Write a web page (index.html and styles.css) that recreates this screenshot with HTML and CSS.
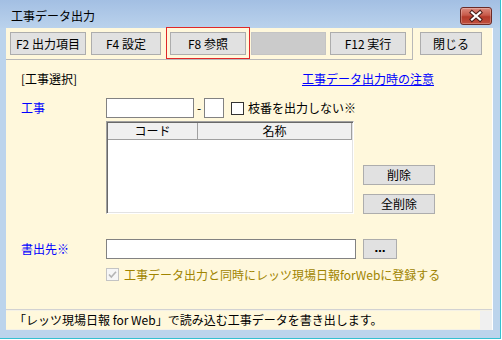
FILE: index.html
```html
<!DOCTYPE html>
<html lang="ja">
<head>
<meta charset="utf-8">
<title>工事データ出力</title>
<link rel="stylesheet" href="styles.css">
</head>
<body>
<div class="window">
  <div class="titlebar">
    <span class="title">工事データ出力</span>
    <div class="close-x">
      <svg width="32" height="18" viewBox="0 0 32 18">
        <path d="M12 5.5 L20 12.5 M20 5.5 L12 12.5" stroke="#4a1d18" stroke-width="4.2" stroke-linecap="square" fill="none"/>
        <path d="M12 5.5 L20 12.5 M20 5.5 L12 12.5" stroke="#ffffff" stroke-width="2.2" stroke-linecap="square" fill="none"/>
      </svg>
    </div>
  </div>
  <div class="client">
    <div class="toolbar-row">
      <div class="toolbar">
        <div class="btn tb w76 first">F2 出力項目</div>
        <div class="btn tb w70 gap5">F4 設定</div>
        <div class="focus-ring"><div class="btn tb w76">F8 参照</div></div>
        <div class="tb-blank"></div>
        <div class="btn tb w76 gap4">F12 実行</div>
      </div>
      <div class="btn tb close-btn">閉じる</div>
    </div>
    <div class="main">
      <div class="head-row">
        <span>[工事選択]</span>
        <a class="link" href="#">工事データ出力時の注意</a>
      </div>
      <div class="form-row">
        <span class="label">工事</span>
        <div class="textbox w88"></div>
        <span class="dash">-</span>
        <div class="textbox w20"></div>
        <span class="checkbox"></span>
        <span class="check-text">枝番を出力しない※</span>
      </div>
      <div class="list-row">
        <div class="listview">
          <div class="lv-head">
            <div class="lv-col c1">コード</div>
            <div class="lv-col c2">名称</div>
          </div>
        </div>
        <div class="side-btns">
          <div class="btn sb">削除</div>
          <div class="btn sb">全削除</div>
        </div>
      </div>
      <div class="form-row out-row">
        <span class="label">書出先※</span>
        <div class="textbox w250"></div>
        <div class="btn dots">…</div>
      </div>
      <div class="check-row">
        <span class="checkbox disabled">
          <svg width="11" height="11" viewBox="0 0 11 11"><path d="M2 5.5 L4.3 8 L9 2.8" stroke="#b4b4b4" stroke-width="1.6" fill="none"/></svg>
        </span>
        <span class="olive">工事データ出力と同時にレッツ現場日報forWebに登録する</span>
      </div>
    </div>
    <div class="statusbar">
      <div class="status-text">「レッツ現場日報 for Web」で読み込む工事データを書き出します。</div>
      <div class="grip"></div>
    </div>
  </div>
</div>
</body>
</html>
```
FILE: styles.css
```css
* { box-sizing: border-box; }
html, body { margin: 0; padding: 0; background: #ffffff; }
body {
  font-family: "Noto Sans CJK JP", "Noto Sans", sans-serif;
  font-size: 12px;
  color: #000;
}
.window {
  width: 501px;
  height: 339px;
  background: #bcd4ec;
  border-right: 1px solid #35c0d0;
  border-bottom: 1px solid #35c0d0;
  display: flex;
  flex-direction: column;
}
.titlebar {
  height: 28px;
  display: flex;
  align-items: flex-start;
  background: linear-gradient(#a3bfe3, #bad2ec);
}
.title {
  margin: 9px 0 0 11px;
  line-height: 14px;
}
.close-x {
  margin: 7px 8px 0 auto;
  width: 32px;
  height: 18px;
  border: 1px solid #6b2b26;
  border-radius: 3px;
  background: linear-gradient(#dc8b7e 0%, #c75a4a 45%, #b43a2a 55%, #c0503e 100%);
  box-shadow: inset 0 0 0 1px rgba(255,255,255,0.25);
  display: flex;
  align-items: center;
  justify-content: center;
  overflow: hidden;
}
.close-x svg { display: block; flex: none; }
.client {
  margin-left: 6px;
  width: 487px;
  height: 302px;
  background: #fff8dc;
  border-right: 1px solid #ffffff;
  display: flex;
  flex-direction: column;
}
.toolbar-row {
  display: flex;
  align-items: flex-start;
  height: 32px;
}
.toolbar {
  width: 407px;
  height: 32px;
  border-right: 1px solid #b8b8b8;
  border-bottom: 1px solid #b8b8b8;
  display: flex;
  align-items: flex-start;
  padding-top: 4px;
}
.btn {
  background: #e1e1e1;
  border: 1px solid #adadad;
  display: flex;
  align-items: center;
  justify-content: center;
  line-height: 14px;
  white-space: nowrap;
  color: #000;
}
.tb { height: 23px; }
.w76 { width: 76px; }
.w70 { width: 70px; }
.first { margin-left: 4px; }
.gap5 { margin-left: 5px; }
.gap4 { margin-left: 4px; }
.focus-ring {
  margin-left: 5px;
  margin-top: -5px;
  border: 1px solid #e02828;
  padding: 4px 3px 3px 3px;
  width: 84px;
  height: 32px;
}
.tb-blank {
  margin-left: 1px;
  width: 75px;
  height: 23px;
  background: #cbcbcb;
  border: 1px solid #c4c4c4;
}
.close-btn {
  width: 62px;
  margin-left: 7px;
  margin-top: 4px;
}
.main {
  padding-left: 15px;
  display: flex;
  flex-direction: column;
}
.head-row {
  margin-top: 12px;
  width: 413px;
  display: flex;
  justify-content: space-between;
  line-height: 14px;
}
.link { color: #0000ff; text-decoration: underline; }
.form-row {
  margin-top: 12px;
  display: flex;
  align-items: center;
  height: 20px;
}
.label {
  width: 85px;
  color: #0000ff;
  line-height: 20px;
}
.textbox {
  height: 20px;
  background: #fff;
  border: 1px solid #828282;
}
.w88 { width: 88px; }
.w20 { width: 20px; }
.w250 { width: 250px; }
.dash {
  width: 10px;
  text-align: center;
  line-height: 20px;
}
.checkbox {
  width: 13px;
  height: 13px;
  border: 1px solid #333;
  background: #fff;
  margin-left: 7px;
  display: flex;
  align-items: center;
  justify-content: center;
}
.check-text { margin-left: 4px; line-height: 14px; }
.list-row {
  margin-top: 3px;
  margin-left: 85px;
  display: flex;
  align-items: flex-start;
}
.listview {
  width: 248px;
  height: 93px;
  background: #fff;
  border: 1px solid;
  border-color: #a0a0a0 #ffffff #ffffff #a0a0a0;
  box-shadow: inset 1px 1px 0 #696969, inset -1px -1px 0 #e3e3e3;
  padding: 1px 1px 1px 1px;
}
.lv-head {
  display: flex;
  height: 17px;
  background: #f0f0f0;
  border-bottom: 1px solid #a0a0a0;
}
.lv-col {
  line-height: 16px;
  text-align: center;
}
.c1 { width: 90px; border-right: 1px solid #a0a0a0; }
.c2 { width: 154px; border-right: 1px solid #a0a0a0; }
.side-btns {
  margin-left: 9px;
  padding-top: 44px;
  display: flex;
  flex-direction: column;
  gap: 9px;
}
.sb { width: 72px; height: 20px; }
.out-row { margin-top: 25px; }
.dots {
  margin-left: 7px;
  width: 34px;
  height: 20px;
  font-weight: bold;
  font-family: "DejaVu Sans", sans-serif;
  font-size: 11px;
  letter-spacing: 0;
}
.check-row {
  margin-top: 9px;
  margin-left: 85px;
  display: flex;
  align-items: center;
  height: 13px;
}
.checkbox.disabled {
  margin-left: 0;
  border-color: #c4c4c4;
  background: #f6f6f6;
}
.checkbox svg { display: block; }
.olive {
  margin-left: 5px;
  color: #a08400;
  line-height: 14px;
}
.statusbar {
  margin-top: auto;
  height: 21px;
  border-top: 1px solid #d2d2d2;
  padding-top: 1px;
  display: flex;
  background: #f4f1e6;
}
.status-text {
  width: 474px;
  height: 18px;
  background: #fff8dc;
  padding-left: 8px;
  line-height: 18px;
  white-space: nowrap;
  overflow: hidden;
}
.grip {
  flex: 1;
  height: 19px;
  background: #f0f0f0;
}
```
